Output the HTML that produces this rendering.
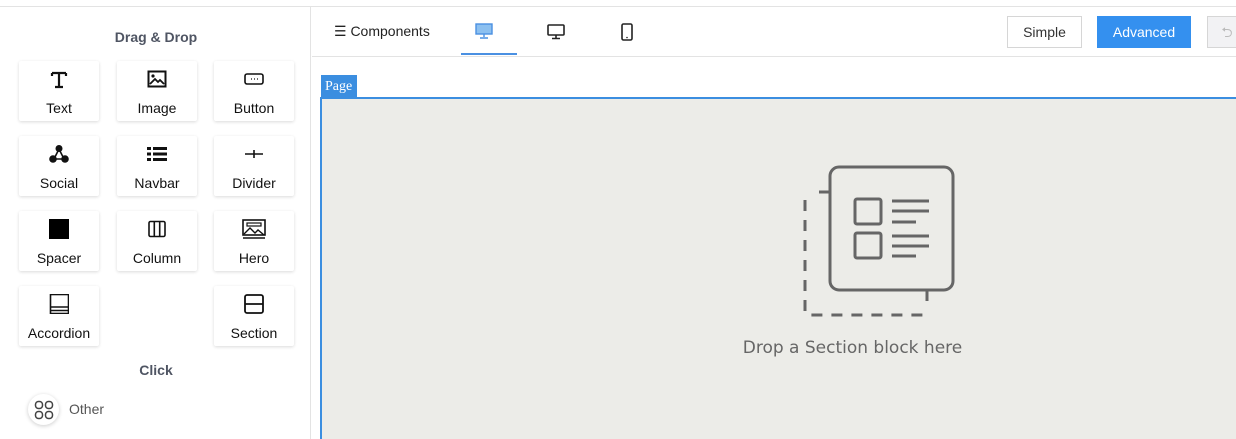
<!DOCTYPE html>
<html><head><style>
*{box-sizing:border-box;margin:0;padding:0}
body{width:1236px;height:439px;overflow:hidden;background:#fff;font-family:"Liberation Sans",sans-serif;position:relative}
.topline{position:absolute;left:0;top:6px;width:1236px;height:1px;background:#e3e3e3}
.side{position:absolute;left:0;top:7px;width:311px;height:432px;border-right:1px solid #e3e3e3;background:#fff}
.h{position:absolute;width:312px;text-align:center;font-weight:bold;font-size:14px;color:#4f5563}
.tile{position:absolute;width:80px;height:60px;background:#fff;box-shadow:0 1px 3px rgba(0,0,0,.15);border-radius:2px;text-align:center;font-size:14px;color:#111}
.tile svg{position:absolute;left:30px;top:8px}
.tile span{position:absolute;left:0;right:0;top:39px}
.tb{position:absolute;left:312px;top:7px;width:924px;height:50px;border-bottom:1px solid #e3e3e3}
.btn{position:absolute;top:9px;height:32px;font-size:14px;line-height:30px;text-align:center;border:1px solid #d6d6d6}
</style></head><body>
<div class="topline"></div>
<div class="side">
<div class="h" style="top:22px">Drag &amp; Drop</div>
<div class="tile" style="left:19px;top:54px"><svg width="20" height="20" viewBox="0 0 20 20"><path d="M3 4h14M10 4v14M6 18h8M3 4v3M17 4v3" stroke="#111" stroke-width="2.2" fill="none"/></svg><span>Text</span></div>
<div class="tile" style="left:117px;top:54px"><svg width="20" height="20" viewBox="0 0 20 20"><rect x="1.5" y="2.5" width="17" height="15" fill="none" stroke="#111" stroke-width="2"/><circle cx="6" cy="7" r="1.6" fill="#111"/><path d="M3 15l5-5 3 3 2-2 4 4" stroke="#111" stroke-width="1.8" fill="none"/></svg><span>Image</span></div>
<div class="tile" style="left:214px;top:54px"><svg width="20" height="20" viewBox="0 0 20 20"><rect x="1" y="5" width="18" height="10" rx="2" fill="none" stroke="#111" stroke-width="1.6"/><path d="M7 10h1M10 10h1M13 10h1" stroke="#111" stroke-width="1.2"/></svg><span>Button</span></div>
<div class="tile" style="left:19px;top:129px"><svg width="20" height="20" viewBox="0 0 20 20"><path d="M10 5L5 15h10z" fill="none" stroke="#111" stroke-width="1.6"/><circle cx="10" cy="4.5" r="3.5" fill="#111"/><circle cx="4" cy="15" r="3.8" fill="#111"/><circle cx="16" cy="15" r="3.8" fill="#111"/></svg><span>Social</span></div>
<div class="tile" style="left:117px;top:129px"><svg width="20" height="20" viewBox="0 0 20 20"><path d="M0 3h4v3H0zM6 3h14v3H6zM0 8.5h4v3H0zM6 8.5h14v3H6zM0 14h4v3H0zM6 14h14v3H6z" fill="#111"/></svg><span>Navbar</span></div>
<div class="tile" style="left:214px;top:129px"><svg width="20" height="20" viewBox="0 0 20 20"><path d="M1 10h18M10 6v8" stroke="#111" stroke-width="1.6"/></svg><span>Divider</span></div>
<div class="tile" style="left:19px;top:204px"><svg width="20" height="20" viewBox="0 0 20 20"><rect x="0" y="0" width="20" height="20" fill="#000"/></svg><span>Spacer</span></div>
<div class="tile" style="left:117px;top:204px"><svg width="20" height="20" viewBox="0 0 20 20"><rect x="2" y="2.5" width="16" height="15" rx="1.5" fill="none" stroke="#111" stroke-width="1.6"/><path d="M7.3 2.5v15M12.7 2.5v15" stroke="#111" stroke-width="1.6"/></svg><span>Column</span></div>
<div class="tile" style="left:214px;top:204px"><svg width="24" height="20" viewBox="0 0 24 20" style="left:28px"><rect x="1" y="1" width="22" height="15" fill="none" stroke="#111" stroke-width="1.6"/><rect x="5" y="4" width="14" height="3" fill="none" stroke="#111" stroke-width="1.2"/><path d="M2 15l6-6 5 5 3-3 6 5M1 19h22" stroke="#111" stroke-width="1.4" fill="none"/></svg><span>Hero</span></div>
<div class="tile" style="left:19px;top:279px"><svg width="20" height="20" viewBox="0 0 20 20"><rect x="1.5" y="0.5" width="18" height="19" fill="none" stroke="#111" stroke-width="1.6"/><path d="M1.5 13h18M1.5 16.5h18" stroke="#111" stroke-width="1.4"/></svg><span>Accordion</span></div>
<div class="tile" style="left:214px;top:279px"><svg width="20" height="20" viewBox="0 0 20 20"><rect x="1" y="1" width="18" height="18" rx="2" fill="none" stroke="#111" stroke-width="1.8"/><path d="M1 10h18" stroke="#111" stroke-width="1.8"/></svg><span>Section</span></div>
<div class="h" style="top:355px">Click</div>
<div style="position:absolute;left:28px;top:387px;width:31px;height:31px;border-radius:50%;background:#fff;box-shadow:0 1px 4px rgba(0,0,0,.2)"><svg width="20" height="20" viewBox="0 0 20 20" style="position:absolute;left:6px;top:6px"><g fill="none" stroke="#444" stroke-width="1.5"><rect x="1.5" y="1.5" width="7" height="7" rx="3"/><rect x="11.5" y="1.5" width="7" height="7" rx="3"/><rect x="1.5" y="11.5" width="7" height="7" rx="3"/><rect x="11.5" y="11.5" width="7" height="7" rx="3"/></g></svg></div>
<div style="position:absolute;left:69px;top:394px;font-size:14px;color:#555">Other</div>
</div>
<div class="tb">
<div style="position:absolute;left:22px;top:16px;font-size:14px;color:#222">☰ Components</div>
<svg width="18" height="16" viewBox="0 0 18 16" style="position:absolute;left:163px;top:16px"><rect x="1" y="1" width="16" height="10" fill="#8cc0f0" stroke="#4a90e2" stroke-width="1.4"/><path d="M9 11v3M5 15h8" stroke="#4a90e2" stroke-width="1.4"/></svg>
<div style="position:absolute;left:149px;top:46px;width:56px;height:2px;background:#4a90e2"></div>
<svg width="18" height="16" viewBox="0 0 18 16" style="position:absolute;left:235px;top:17px"><rect x="1" y="1" width="16" height="10" rx="1" fill="none" stroke="#222" stroke-width="1.6"/><path d="M9 11v3M5 14.5h8" stroke="#222" stroke-width="1.6"/></svg>
<svg width="12" height="18" viewBox="0 0 12 18" style="position:absolute;left:309px;top:16px"><rect x="1" y="1" width="10" height="16" rx="1.5" fill="none" stroke="#222" stroke-width="1.6"/><circle cx="6" cy="14.5" r=".8" fill="#222"/></svg>
<div class="btn" style="left:695px;width:75px;color:#333">Simple</div>
<div class="btn" style="left:785px;width:94px;background:#3490ef;border-color:#3490ef;color:#fff">Advanced</div>
<div class="btn" style="left:895px;width:40px;background:#f2f2f4;color:#bbb">⮌</div>
</div>
<div style="position:absolute;left:321px;top:75px;width:36px;height:23px;background:#3b8ee0;color:#fff;font-family:'Liberation Serif',serif;font-size:14px;line-height:23px;padding-left:4px">Page</div>
<div style="position:absolute;left:320px;top:97px;width:916px;height:342px;background:#ecece8;border-top:2px solid #3b8ee0;border-left:2px solid #3b8ee0"></div>
<svg width="170" height="170" viewBox="0 0 170 170" style="position:absolute;left:790px;top:155px"><g fill="none" stroke="#666" stroke-width="3"><rect x="40" y="12" width="123" height="123" rx="9"/><path d="M29 37h10M137 136v10" /><path d="M15 45v112a3 3 0 0 0 3 3h118" stroke-dasharray="11 9"/><rect x="65" y="44" width="26" height="25" rx="2"/><rect x="65" y="78" width="26" height="25" rx="2"/><path d="M102 46h37M102 56h37M102 67h24M102 81h37M102 91h37M102 101h24"/></g></svg>
<div style="position:absolute;left:720px;top:338px;width:265px;text-align:center;font-family:'DejaVu Sans',sans-serif;font-size:17px;color:#666">Drop a Section block here</div>
</body></html>
